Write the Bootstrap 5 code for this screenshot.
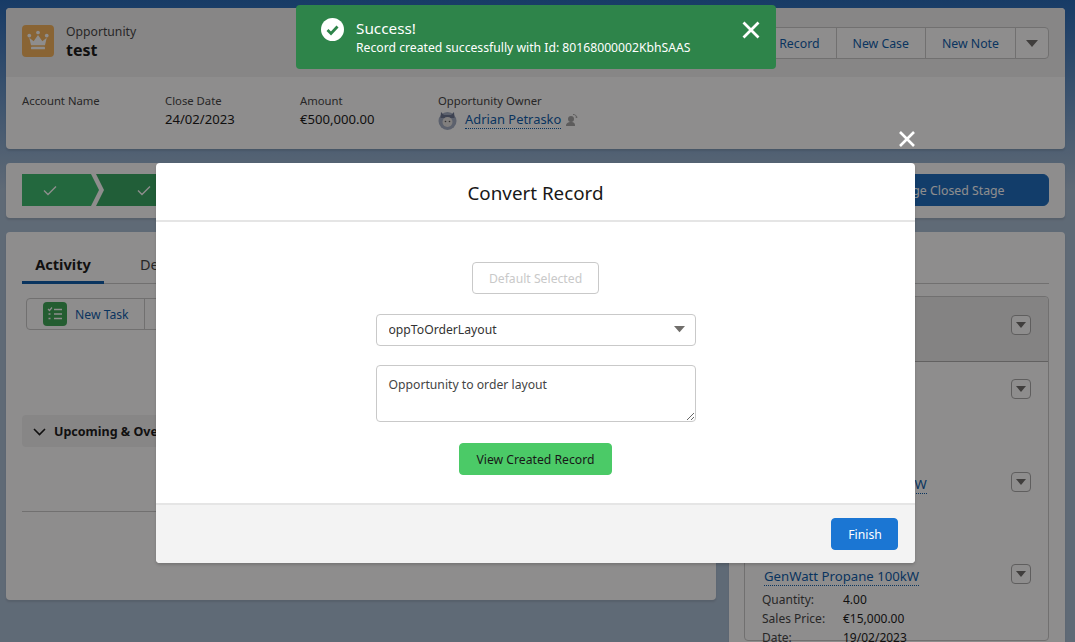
<!DOCTYPE html>
<html lang="en">
<head>
<meta charset="UTF-8">
<title>Convert Record</title>
<link href="https://cdn.jsdelivr.net/npm/bootstrap@5.3.0/dist/css/bootstrap.min.css" rel="stylesheet">
<style>
html, body { height: 642px; overflow: hidden; }
body { position: relative; font-family: "Noto Sans", "Liberation Sans", sans-serif; font-size: 12.2px; color: #181818; background: linear-gradient(#2468b8 0, #a9bed4 190px); }
a { color: #0b5cab; text-decoration: none; }
.page-wrap { padding: 8px 10px 0 6px; display: flex; flex-direction: column; gap: 14px; }
.sf-card { background: #fff; border-radius: 4px; box-shadow: 0 2px 2px rgba(0,0,0,.1); }
.hl-top { height: 69px; background: #f3f3f3; border-radius: 4px 4px 0 0; padding: 17px 16px 0 16px; }
.crown-box { width: 32px; height: 32px; border-radius: 4px; background: #f5b45c; }
.obj-type { font-size: 12.2px; line-height: 17px; color: #444; }
.obj-name { font-size: 16px; line-height: 20px; font-weight: 700; }
.act-btn { height: 32px; font-size: 12.3px; padding: 2px 16px 0; color: #0b5cab; background: #fff; border: 1px solid #c9c9c9; border-radius: 4px; }
.act-btn:hover { background: #fff; color: #0b5cab; border-color: #c9c9c9; }
.caret-dn { display: inline-block; width: 0; height: 0; border-left: 6px solid transparent; border-right: 6px solid transparent; border-top: 7px solid #706e6b; }
.hl-fields { height: 72px; padding: 14px 16px 0 16px; }
.hl-col { line-height: 19px; }
.hl-col .lbl { font-size: 11.3px; color: #444; }
.hl-col .val { font-size: 13.1px; }
.w-acct { width: 143px; } .w-date { width: 135px; } .w-amt { width: 138px; }
.owner-link { font-size: 12.9px; border-bottom: 1px dotted #0b5cab; line-height: 17px; }
.path-card { height: 55px; padding: 11px 16px; }
.chev { height: 32px; color: #fff; }
.chev-1 { width: 78px; margin-right: -4px; background: #3abb6e; clip-path: polygon(0 0, 69px 0, 77px 50%, 69px 100%, 0 100%); }
.chev-2 { width: 140px; background: #37a862; clip-path: polygon(0 0, 100% 0, 100% 100%, 0 100%, 8px 50%); }
.stage-btn, .stage-btn:hover { height: 32px; width: 211px; background: #1b6cbf; border-color: #1b6cbf; color: #fff; font-size: 12.3px; padding: 2px 0 0; }
.main-row { gap: 13px; }
.left-col { width: 710px; height: 368px; padding: 16px; }
.right-col { width: 336px; height: 440px; padding: 16px; flex-shrink: 0; }
.tab-bar { height: 36px; border-bottom: 1px solid #c9c9c9; margin-bottom: 14px; }
.tab-on { width: 82px; height: 36px; margin-bottom: -1px; text-align: center; font-size: 14.6px; font-weight: 700; line-height: 33px; border-bottom: 3px solid #0b5cab; }
.tab-off { margin-left: 36px; font-size: 14.5px; line-height: 33px; color: #444; }
.task-group { margin-left: 4px; width: 300px; height: 32px; border: 1px solid #c9c9c9; border-radius: 4px; }
.task-cell { width: 118px; height: 30px; padding-left: 16px; border-right: 1px solid #c9c9c9; gap: 8px; font-size: 12.2px; color: #0b5cab; }
.task-lbl { padding-top: 2px; }
.task-ico { width: 24px; height: 24px; background: #3ba755; border-radius: 4px; }
.upc-bar { margin-top: 85px; height: 32px; background: #f3f3f3; border-radius: 4px; padding-left: 11px; padding-top: 2px; gap: 8px; font-size: 12.5px; font-weight: 700; }
.past-line { margin-top: 64px; border-top: 1px solid #c9c9c9; padding-top: 17px; text-align: center; font-size: 11.5px; color: #444; }
.rel-tabs { height: 36px; border-bottom: 1px solid #c9c9c9; margin-bottom: 12px; }
.rel-box { border: 1px solid #c9c9c9; border-radius: 4px; margin-left: -1px; }
.rel-head { height: 65px; background: #ededed; border-bottom: 1px solid #aeaeae; border-radius: 4px 4px 0 0; padding: 18px 17px 0 0; }
.rel-item { height: 92.5px; padding: 17px 17px 0 19px; }
.mini-btn { width: 20px; height: 20px; border: 1px solid #a8a8a8; border-radius: 4px; background: #fff; padding-top: 6px; }
.mini-btn .caret-dn { border-left-width: 5px; border-right-width: 5px; border-top-width: 6px; vertical-align: top; }
.prod-link { font-size: 13.2px; line-height: 18px; border-bottom: 1px dotted #0b5cab; display: inline-block; margin-top: 3px; margin-bottom: 4px; }
.prod-row { line-height: 19px; font-size: 12px; margin-left: -2px; }
.prod-row .k { width: 81px; color: #444; }
.backdrop-dim { position: absolute; inset: 0; background: rgba(8,7,7,.46); }
.toast-ok { position: absolute; left: 296px; top: 5px; width: 480px; height: 64px; background: #2e844a; border-radius: 4px; color: #fff; padding: 13px 15px 0 25px; gap: 12px; }
.toast-title { font-size: 15.3px; line-height: 20px; }
.toast-msg { font-size: 12.2px; line-height: 19px; }
.toast-x { margin-left: auto; margin-top: 2px; }
.modal-x { position: absolute; left: 898px; top: 130px; }
.convert-modal { position: absolute; left: 156px; top: 163px; width: 759px; height: 400px; background: #fff; border-radius: 4px; box-shadow: 0 2px 3px rgba(0,0,0,.16); overflow: hidden; }
.cm-head { height: 59px; border-bottom: 2px solid #e5e5e5; font-size: 18.800px; text-align: center; line-height: 60px; color: #181818; }
.cm-body { height: 281px; padding-top: 40px; gap: 19.5px; }
.cm-foot { height: 60px; background: #f3f3f3; border-top: 2px solid #e5e5e5; padding: 13px 17px 0 0; }
.btn-default-sel, .btn-default-sel:disabled { width: 127px; height: 32px; padding: 2px 0 0; background: #fff; border: 1px solid #c9c9c9; border-radius: 4px; color: #c9c9c9; font-size: 12.2px; opacity: 1; }
.cm-select { width: 320px; height: 32px; padding: 1px 30px 0 12px; font-size: 12.2px; color: #333; border-color: #c9c9c9; border-radius: 4px; background-image: url("data:image/svg+xml,%3Csvg xmlns='http://www.w3.org/2000/svg' width='12' height='8'%3E%3Cpath d='M0 0h12L6 7z' fill='%23706e6b'/%3E%3C/svg%3E"); background-size: 11px 7px; background-position: right 10px center; }
.cm-text { width: 320px; height: 57px; padding: 9px 12px 6px; font-size: 12.2px; line-height: 19px; color: #444; border-color: #c9c9c9; border-radius: 4px; }
.btn-view { width: 153px; height: 32px; padding: 2px 0 0; background: #4bca67; border: 1px solid #4bca67; border-radius: 4px; color: #181818; font-size: 12.2px; margin-top: 1.5px; }
.btn-finish { width: 67px; height: 32px; padding: 2px 0 0 1px; background: #1b76d3; border: 1px solid #1b76d3; border-radius: 4px; color: #fff; font-size: 12.2px; }
</style>
</head>
<body>
<div class="page-wrap">
  <div class="sf-card">
    <div class="hl-top d-flex justify-content-between">
      <div class="d-flex gap-2 align-items-center" style="height:32px">
        <div class="crown-box d-flex align-items-center justify-content-center">
          <svg width="24" height="24" viewBox="0 0 22 22" fill="#fff"><circle cx="3" cy="6" r="1.700"/><circle cx="11" cy="3.200" r="1.700"/><circle cx="19" cy="6" r="1.700"/><path d="M3 8l4 3.200L11 5.500l4 5.700L19 8l-1.600 6.800H4.600z"/><rect x="4.600" y="16.200" width="12.800" height="2.400" rx=".6"/></svg>
        </div>
        <div class="ms-1"><div class="obj-type">Opportunity</div><div class="obj-name">test</div></div>
      </div>
      <div class="btn-group" style="height:32px;margin-top:2px">
        <button class="btn act-btn">Record</button>
        <button class="btn act-btn">New Case</button>
        <button class="btn act-btn">New Note</button>
        <button class="btn act-btn" style="padding:0 10px"><span class="caret-dn"></span></button>
      </div>
    </div>
    <div class="hl-fields d-flex">
      <div class="hl-col w-acct"><div class="lbl">Account Name</div></div>
      <div class="hl-col w-date"><div class="lbl">Close Date</div><div class="val">24/02/2023</div></div>
      <div class="hl-col w-amt"><div class="lbl">Amount</div><div class="val">€500,000.00</div></div>
      <div class="hl-col">
        <div class="lbl">Opportunity Owner</div>
        <div class="d-flex align-items-center gap-2">
          <svg width="19" height="20" viewBox="0 0 19 20"><circle cx="9.500" cy="11" r="9" fill="#a3aec4"/><path d="M3 2l3 3h7l3-3 .5 6h-14z" fill="#6c7793"/><circle cx="9.500" cy="12" r="5" fill="#e8e6e3"/><circle cx="7.500" cy="11.500" r=".8" fill="#555"/><circle cx="11.500" cy="11.500" r=".8" fill="#555"/></svg>
          <a href="#" class="owner-link">Adrian Petrasko</a>
          <svg width="13" height="14" viewBox="0 0 13 14" fill="#a5a5a5" style="margin-left:-4px"><circle cx="6" cy="6" r="3"/><path d="M1 13c0-3 2-4 5-4s4 1 4 4z"/><path d="M8 1.500c2 0 3.500 1 4 3l-1.500-.5" fill="none" stroke="#a5a5a5"/></svg>
        </div>
      </div>
    </div>
  </div>

  <div class="sf-card path-card d-flex justify-content-between">
    <div class="d-flex">
      <div class="chev chev-1 d-flex align-items-center" style="padding-left:21px">
        <svg width="14" height="11" viewBox="0 0 14 11" fill="none" stroke="#fff" stroke-width="1.400"><path d="M1 5.500l4 4 8-8"/></svg>
      </div>
      <div class="chev chev-2 d-flex align-items-center" style="padding-left:41px">
        <svg width="14" height="11" viewBox="0 0 14 11" fill="none" stroke="#fff" stroke-width="1.400"><path d="M1 5.500l4 4 8-8"/></svg>
      </div>
    </div>
    <button class="btn stage-btn">Change Closed Stage</button>
  </div>

  <div class="d-flex main-row">
    <div class="sf-card left-col">
      <div class="tab-bar d-flex">
        <div class="tab-on">Activity</div>
        <div class="tab-off">Details</div>
      </div>
      <div class="task-group">
        <div class="task-cell d-flex align-items-center">
          <span class="task-ico d-flex align-items-center justify-content-center">
            <svg width="16" height="16" viewBox="0 0 16 16" fill="none" stroke="#fff" stroke-width="1.500"><path d="M1 3l1.500 1.500L5 1.500" stroke-width="1.200"/><path d="M7 3.500h8M7 8h8M7 12.500h8M1.500 8h2M1.500 12.500h2"/></svg>
          </span>
          <span class="task-lbl">New Task</span>
        </div>
      </div>
      <div class="upc-bar d-flex align-items-center">
        <svg width="13" height="8" viewBox="0 0 13 8" fill="none" stroke="#181818" stroke-width="1.600"><path d="M1 1l5.500 5.500L12 1"/></svg>
        Upcoming &amp; Overdue
      </div>
      <div class="past-line">No past activity. Past meetings and tasks marked as done show up here.</div>
    </div>

    <div class="sf-card right-col">
      <div class="rel-tabs"></div>
      <div class="rel-box">
        <div class="rel-head d-flex justify-content-end"><div class="mini-btn text-center"><span class="caret-dn"></span></div></div>
        <div class="rel-item d-flex justify-content-end"><div class="mini-btn text-center"><span class="caret-dn"></span></div></div>
        <div class="rel-item d-flex justify-content-between">
          <div><a href="#" class="prod-link">GenWatt Propane 1000kW</a></div>
          <div class="mini-btn text-center"><span class="caret-dn"></span></div>
        </div>
        <div class="rel-item d-flex justify-content-between">
          <div>
            <a href="#" class="prod-link">GenWatt Propane 100kW</a>
            <div class="prod-row d-flex"><span class="k">Quantity:</span><span>4.00</span></div>
            <div class="prod-row d-flex"><span class="k">Sales Price:</span><span>€15,000.00</span></div>
            <div class="prod-row d-flex"><span class="k">Date:</span><span>19/02/2023</span></div>
          </div>
          <div class="mini-btn text-center"><span class="caret-dn"></span></div>
        </div>
      </div>
    </div>
  </div>
</div>

<div class="backdrop-dim"></div>

<svg class="modal-x" width="18" height="18" viewBox="0 0 18 18" fill="none" stroke="#fff" stroke-width="2.600"><path d="M2 2l14 14M16 2L2 16"/></svg>

<div class="convert-modal">
  <div class="cm-head">Convert Record</div>
  <div class="cm-body d-flex flex-column align-items-center">
    <button class="btn btn-default-sel" disabled>Default Selected</button>
    <select class="form-select cm-select"><option>oppToOrderLayout</option></select>
    <textarea class="form-control cm-text">Opportunity to order layout</textarea>
    <button class="btn btn-view">View Created Record</button>
  </div>
  <div class="cm-foot d-flex justify-content-end">
    <button class="btn btn-finish">Finish</button>
  </div>
</div>

<div class="toast-ok d-flex">
  <svg width="23" height="23" viewBox="0 0 23 23" style="flex-shrink:0"><circle cx="11.500" cy="11.500" r="11.500" fill="#fff"/><path d="M6.500 12l3.500 3.500 6.500-7" fill="none" stroke="#2e844a" stroke-width="2.800"/></svg>
  <div>
    <div class="toast-title">Success!</div>
    <div class="toast-msg">Record created successfully with Id: 80168000002KbhSAAS</div>
  </div>
  <svg class="toast-x" width="20" height="20" viewBox="0 0 20 20" fill="none" stroke="#fff" stroke-width="2.800"><path d="M2.500 2.500l15 15M17.500 2.500l-15 15"/></svg>
</div>

<script src="https://cdn.jsdelivr.net/npm/bootstrap@5.3.0/dist/js/bootstrap.bundle.min.js"></script>
</body>
</html>
